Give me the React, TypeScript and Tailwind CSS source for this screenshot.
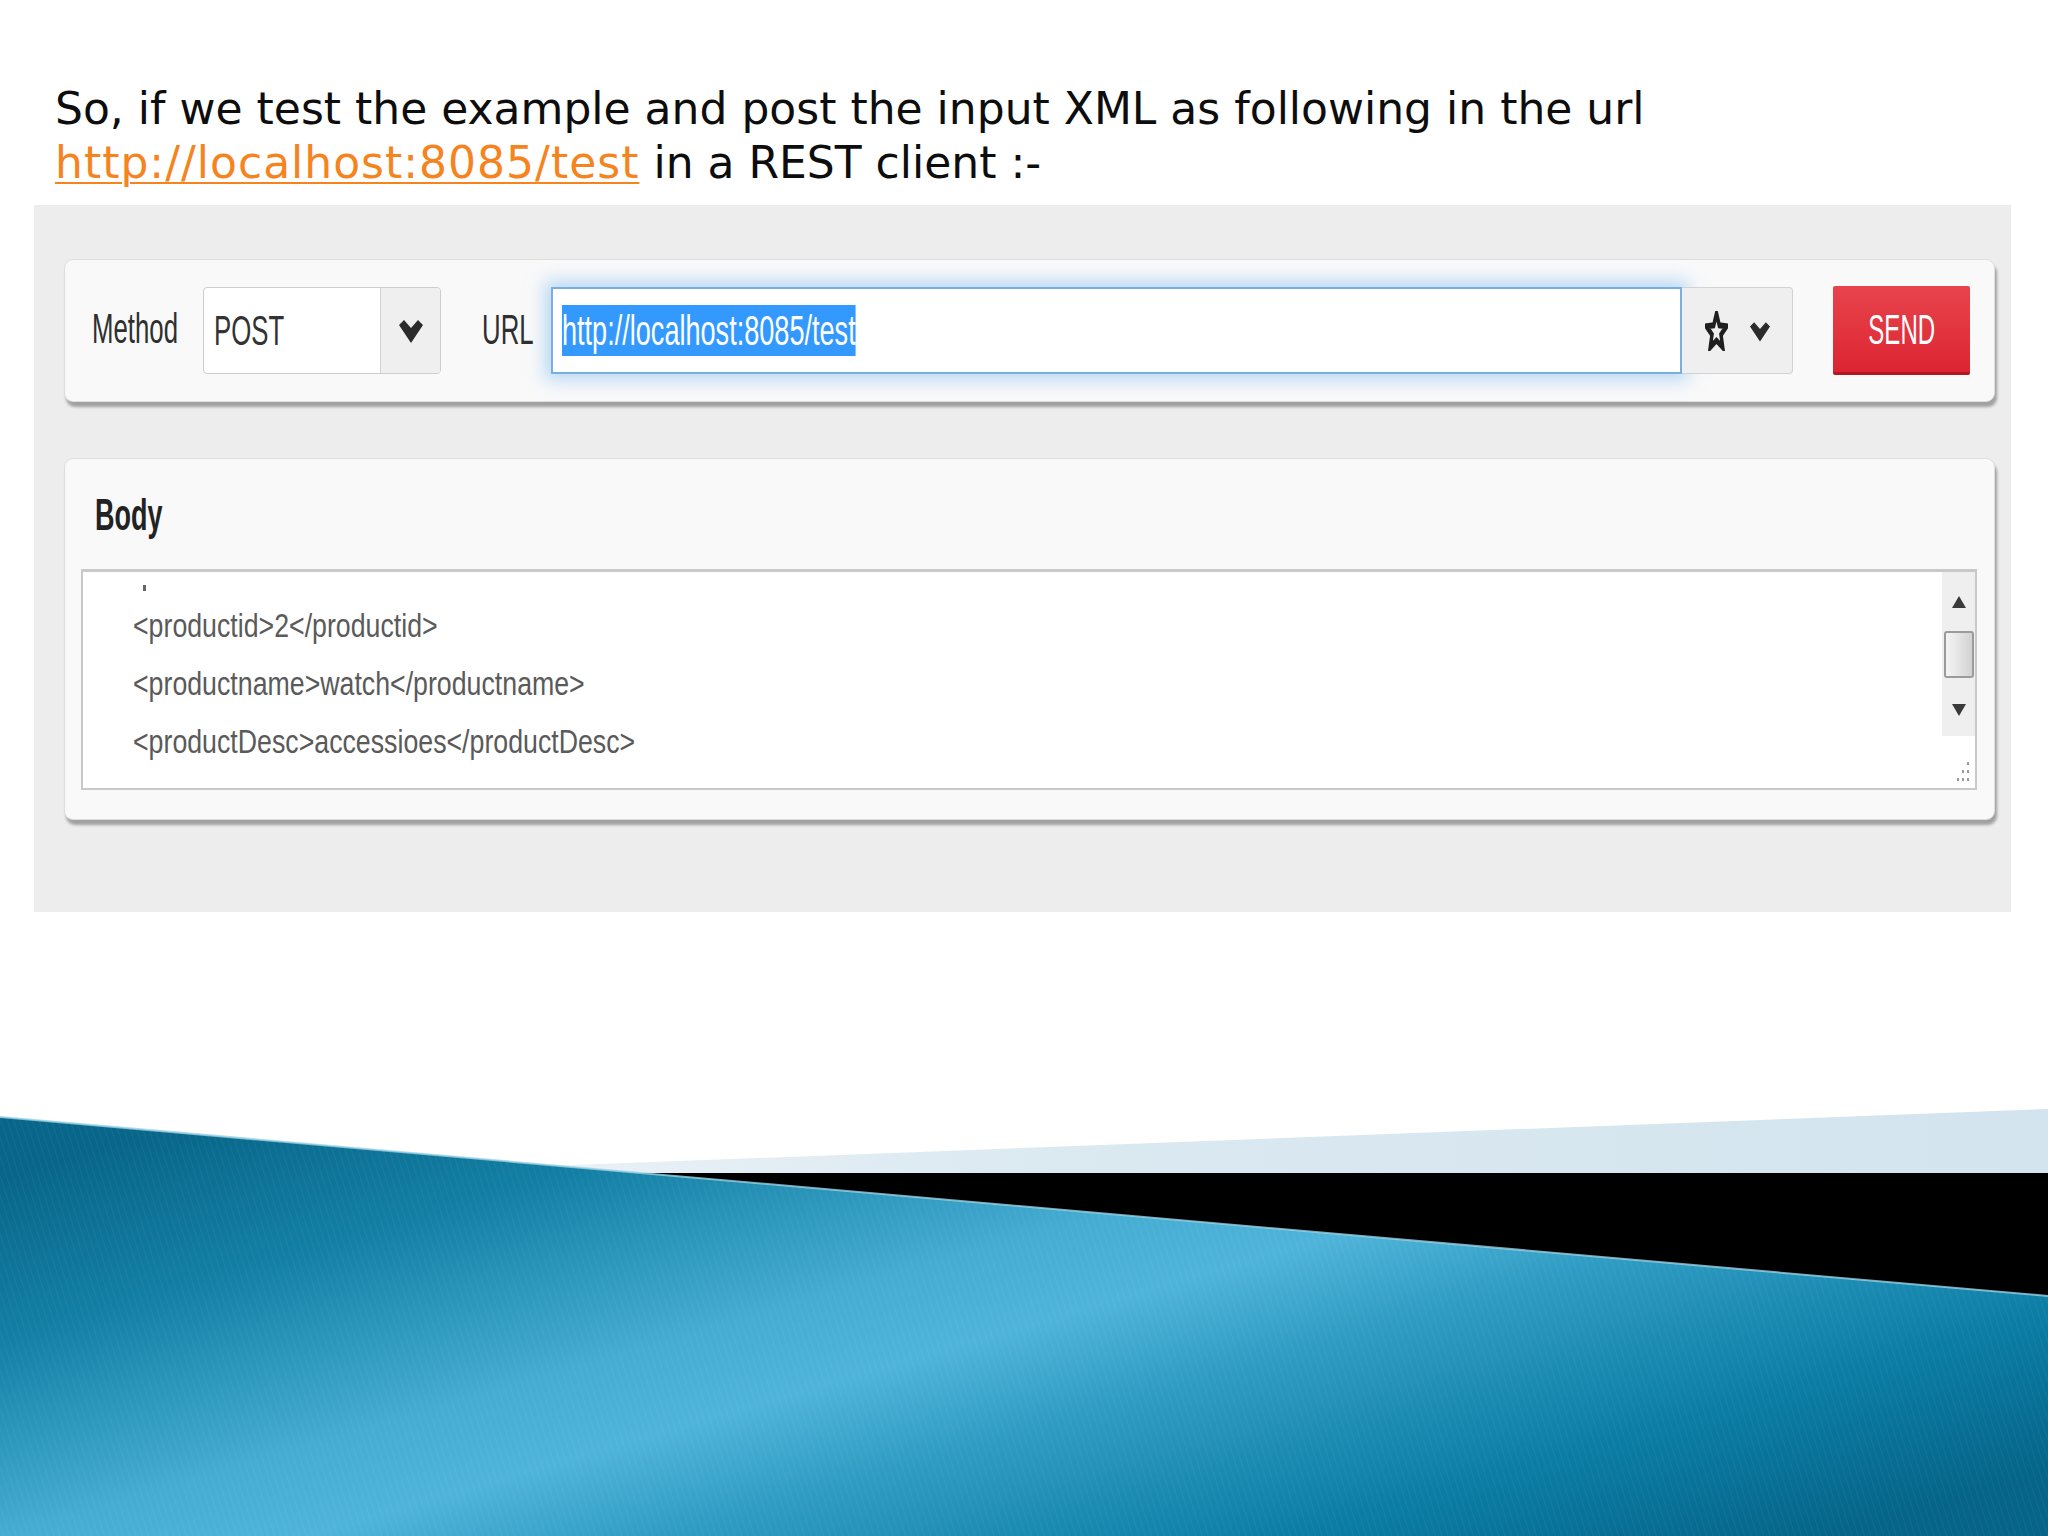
import React from 'react';

const uiFont = { fontFamily: '"Liberation Sans", Arial, sans-serif' };

const ChevronDown: React.FC<{ className?: string }> = ({ className }) => (
  <svg viewBox="0 0 24 25" className={className} fill="#2b2b2b">
    <path d="M0 7 L5 2 L12 10 L19 2 L24 7 L12 25 Z" />
  </svg>
);

const StarOutline: React.FC = () => (
  <svg viewBox="0 0 24 24" width="23" height="40" preserveAspectRatio="none">
    <path
      d="M12 1.5 L14.9 8.6 L22.5 9.2 L16.7 14.2 L18.5 21.8 L12 17.7 L5.5 21.8 L7.3 14.2 L1.5 9.2 L9.1 8.6 Z"
      fill="none"
      stroke="#1f1f1f"
      strokeWidth="3.6"
      strokeLinejoin="miter"
    />
  </svg>
);

const Scrollbar: React.FC = () => (
  <div className="w-[33px] h-[164px] bg-[#efefef] flex flex-col items-center">
    <div className="h-[24px]" />
    <div className="w-0 h-0 border-l-[7px] border-r-[7px] border-b-[12px] border-l-transparent border-r-transparent border-b-[#3a3a3a]" />
    <div className="h-[23px]" />
    <div className="w-[30px] h-[47px] rounded-[3px] border-2 border-[#9b9b9b] bg-gradient-to-r from-[#f4f4f4] via-[#e4e4e4] to-[#d2d2d2]" />
    <div className="h-[26px]" />
    <div className="w-0 h-0 border-l-[7px] border-r-[7px] border-t-[12px] border-l-transparent border-r-transparent border-t-[#3a3a3a]" />
  </div>
);

const ResizeGrip: React.FC = () => (
  <svg viewBox="0 0 16 22" width="16" height="22" className="mb-[6px] mr-[5px]">
    {[
      [13, 2], [13, 10], [8, 10], [13, 18], [8, 18], [3, 18],
    ].map(([x, y], i) => (
      <rect key={i} x={x} y={y} width="2" height="3" fill="#9a9a9a" />
    ))}
  </svg>
);

const BottomDecoration: React.FC = () => (
  <svg viewBox="0 0 2048 456" width="2048" height="456" className="block">
    <defs>
      <linearGradient id="lightBand" x1="0" y1="0" x2="1" y2="0">
        <stop offset="0" stopColor="#eef4f8" />
        <stop offset="0.4" stopColor="#dbe9f1" />
        <stop offset="1" stopColor="#d3e4ee" />
      </linearGradient>
      <linearGradient id="blueFace" x1="0" y1="0.15" x2="1" y2="0.85">
        <stop offset="0" stopColor="#08668a" />
        <stop offset="0.18" stopColor="#137fa4" />
        <stop offset="0.4" stopColor="#45acd2" />
        <stop offset="0.5" stopColor="#4fb4d9" />
        <stop offset="0.62" stopColor="#2f9bc2" />
        <stop offset="0.82" stopColor="#0b7da5" />
        <stop offset="1" stopColor="#056488" />
      </linearGradient>
      <pattern id="streaks" width="6" height="6" patternUnits="userSpaceOnUse" patternTransform="rotate(-18)">
        <rect width="1" height="6" fill="#ffffff" opacity="0.05" />
      </pattern>
    </defs>
    <polygon points="365,93 2048,29 2048,93" fill="url(#lightBand)" />
    <rect x="0" y="93" width="2048" height="363" fill="#000000" />
    <polygon points="0,37 2048,216 2048,456 0,456" fill="url(#blueFace)" />
    <polygon points="0,37 2048,216 2048,456 0,456" fill="url(#streaks)" />
    <line x1="0" y1="37" x2="2048" y2="216" stroke="#9ad3e6" strokeWidth="2" opacity="0.8" />
  </svg>
);

const bodyLines = [
  '<productid>2</productid>',
  '<productname>watch</productname>',
  '<productDesc>accessioes</productDesc>',
];

const App: React.FC = () => {
  return (
    <div className="w-[2048px] h-[1536px] bg-white overflow-hidden">
      {/* Slide text */}
      <div
        className="pl-[55px] pt-[82px] text-[44px] leading-[54px] text-[#0d0d0d]"
        style={{ fontFamily: '"DejaVu Sans", Verdana, sans-serif' }}
      >
        <p className="whitespace-nowrap">So, if we test the example and post the input XML as following in the url</p>
        <p className="whitespace-nowrap">
          <span className="text-[#f5841f] tracking-[1px] underline decoration-[#f5841f] decoration-2 underline-offset-4">http://localhost:8085/test</span>
          <span> in a REST client :-</span>
        </p>
      </div>

      {/* REST client screenshot */}
      <div className="mt-[15px] ml-[34px] w-[1977px] h-[707px] bg-[#ededee] pt-[54px] pl-[30px]" style={uiFont}>
        {/* Request bar */}
        <div className="w-[1931px] h-[143px] bg-[#f9f9fa] rounded-[9px] border border-[#dedede] shadow-[2px_5px_3px_rgba(0,0,0,0.32)] flex items-center pl-[27px]">
          <div className="w-[111px] text-[43px] leading-none text-[#2f2f2f] mb-[5px]">
            <span className="inline-block origin-left scale-x-[0.6] whitespace-nowrap">Method</span>
          </div>

          <div className="w-[238px] h-[87px] flex border border-[#cdcdcd] rounded-[4px] bg-white overflow-hidden">
            <div className="flex-1 flex items-center pl-[10px] text-[43px] leading-none text-[#333]">
              <span className="inline-block origin-left scale-x-[0.6]">POST</span>
            </div>
            <div className="w-[60px] border-l border-[#d0d0d0] bg-[#efefef] flex items-center justify-center">
              <ChevronDown className="w-[24px] h-[25px]" />
            </div>
          </div>

          <div className="ml-[41px] w-[69px] text-[43px] leading-none text-[#2f2f2f] mb-[3px]">
            <span className="inline-block origin-left scale-x-[0.6]">URL</span>
          </div>

          <div className="w-[1131px] h-[87px] border-2 border-[#78aee0] bg-white shadow-[0_0_16px_6px_rgba(120,185,240,0.5)] flex items-center pl-[9px]">
            <span className="inline-block origin-left scale-x-[0.63] bg-[#3399ff] text-white text-[43px] leading-[51px] whitespace-nowrap">
              http://localhost:8085/test
            </span>
          </div>

          <div className="w-[111px] h-[87px] border-y border-r border-[#d2d2d2] rounded-r-[4px] bg-[#efefef] flex items-center justify-center gap-[22px]">
            <StarOutline />
            <ChevronDown className="w-[20px] h-[26px]" />
          </div>

          <button className="ml-[40px] w-[137px] h-[89px] rounded-[2px] bg-gradient-to-b from-[#e8434d] to-[#dc2331] border-b-[3px] border-[#b31822] flex items-center justify-center text-white text-[43px] leading-none">
            <span className="inline-block scale-x-[0.56]">SEND</span>
          </button>
        </div>

        {/* Body panel */}
        <div className="mt-[56px] w-[1931px] h-[362px] bg-[#f9f9fa] rounded-[9px] border border-[#dedede] shadow-[2px_5px_3px_rgba(0,0,0,0.32)] pt-[31px] px-[16px]">
          <div className="pl-[14px] text-[45px] leading-[50px] font-bold text-[#222]">
            <span className="inline-block origin-left scale-x-[0.6]">Body</span>
          </div>

          <div className="mt-[29px] w-[1896px] h-[221px] border-2 border-[#c9c9c9] border-t-[3px] bg-white flex overflow-hidden">
            <div className="flex-1 pl-[50px] flex flex-col">
              {/* descender of the line scrolled out of view */}
              <div className="ml-[10px] mt-[13px] w-[3px] h-[6px] bg-[#666]" />
              <div className="mt-[6px] text-[33px] leading-[58px] text-[#5a5a5a]">
                {bodyLines.map((line) => (
                  <div key={line} className="whitespace-nowrap">
                    <span className="inline-block origin-left scale-x-[0.81]">{line}</span>
                  </div>
                ))}
              </div>
            </div>
            <div className="flex flex-col items-end">
              <Scrollbar />
              <div className="flex-1" />
              <ResizeGrip />
            </div>
          </div>
        </div>
      </div>

      <div className="mt-[168px]">
        <BottomDecoration />
      </div>
    </div>
  );
};

export default App;
